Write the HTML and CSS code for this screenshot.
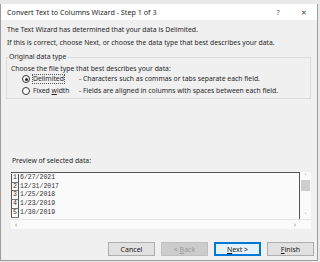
FILE: index.html
```html
<!DOCTYPE html>
<html lang="en">
  <head>
    <meta charset="UTF-8" />
    <title>Convert Text to Columns Wizard - Step 1 of 3</title>
    <link rel="stylesheet" href="styles.css">
  </head>
  <body>
    <div class="dialog">
      <div class="titlebar">
        <span class="title">Convert Text to Columns Wizard - Step 1 of 3</span>
        <span class="help">?</span>
        <span class="close">&#x2715;</span>
      </div>

      <div class="content">
        <p class="intro">The Text Wizard has determined that your data is Delimited.</p>
        <p class="intro second">If this is correct, choose Next, or choose the data type that best describes your data.</p>

        <fieldset class="group">
          <legend>Original data type</legend>
          <p class="choose">Choose the file type that best describes your data:</p>
          <div class="options">
            <label class="option"><span class="radio checked"></span><span class="focus">Delimited</span></label>
            <span class="desc">- Characters such as commas or tabs separate each field.</span>
            <label class="option"><span class="radio"></span><span>Fixed <u>w</u>idth</span></label>
            <span class="desc">- Fields are aligned in columns with spaces between each field.</span>
          </div>
        </fieldset>

        <p class="preview-label">Preview of selected data:</p>
        <div class="preview">
          <div class="preview-main">
            <div class="rows">
              <div class="row"><span class="num">1</span>6/27/2021</div>
              <div class="row"><span class="num">2</span>12/31/2017</div>
              <div class="row"><span class="num">3</span>1/25/2018</div>
              <div class="row"><span class="num">4</span>1/23/2019</div>
              <div class="row"><span class="num">5</span>1/30/2019</div>
            </div>
            <div class="vscroll">
              <span class="arrow">&#x02C4;</span>
              <span class="thumb"></span>
              <span class="spacer"></span>
              <span class="arrow">&#x02C5;</span>
            </div>
          </div>
          <div class="hscroll">
            <span>&#x2039;</span>
            <span>&#x203A;</span>
          </div>
        </div>

        <div class="buttons">
          <button class="btn">Cancel</button>
          <button class="btn disabled">&lt; <u>B</u>ack</button>
          <button class="btn default"><u>N</u>ext &gt;</button>
          <button class="btn"><u>F</u>inish</button>
        </div>
      </div>
    </div>
  </body>
</html>
```

FILE: styles.css
```css
body {
  margin: 0;
  width: 320px;
  height: 262px;
  overflow: hidden;
  background-color: #e9e9e9;
  font-family: "Noto Sans", "DejaVu Sans", sans-serif;
  font-size: 6.8px;
  color: #1f1f1f;
}

p {
  margin: 0;
}

.dialog {
  width: 316px;
  height: 256px;
  margin-top: 4px;
  border-left: 1px solid #9c9c9c;
  border-right: 1px solid #9c9c9c;
  border-bottom: 1px solid #9c9c9c;
  background-color: #f0f0f0;
  display: flex;
  flex-direction: column;
}

/* Title bar */
.titlebar {
  height: 16px;
  background-color: #ffffff;
  display: flex;
  align-items: center;
  padding-left: 6px;
  font-size: 7.2px;
}

.title {
  flex-grow: 1;
}

.help {
  width: 26px;
  text-align: center;
  color: #555;
}

.close {
  width: 26px;
  text-align: center;
  color: #444;
  font-size: 7px;
}

/* Dialog body */
.content {
  flex-grow: 1;
  padding: 5px 3px 0 6px;
  display: flex;
  flex-direction: column;
  line-height: 10px;
}

.intro.second {
  margin-top: 3px;
}

.group {
  margin: 4px 0 0 -1px;
  padding: 0 0 2px 0;
  border: 1px solid #dcdcdc;
  width: 305px;
  box-sizing: border-box;
}

.group legend {
  margin-left: 1px;
  padding: 0 1px;
  line-height: 10px;
}

.choose {
  padding: 2px 0 0 4px;
}

.options {
  display: grid;
  grid-template-columns: 57px 1fr;
  row-gap: 2px;
  padding-left: 15px;
}

.option {
  display: flex;
  align-items: center;
  gap: 3px;
}

.radio {
  width: 6px;
  height: 6px;
  border: 1px solid #333;
  border-radius: 50%;
  background-color: #fff;
  position: relative;
}

.radio.checked::after {
  content: "";
  position: absolute;
  left: 1.5px;
  top: 1.5px;
  width: 3px;
  height: 3px;
  border-radius: 50%;
  background-color: #222;
}

.focus {
  outline: 1px dotted #555;
  outline-offset: 0;
  line-height: 8px;
}

.preview-label {
  margin-top: 57px;
  padding-left: 5px;
}

/* Preview box */
.preview {
  margin-top: 6px;
  margin-left: 4px;
  width: 300px;
  height: 57px;
  background-color: #fafafa;
  display: flex;
  flex-direction: column;
}

.preview-main {
  display: flex;
  height: 47px;
}

.rows {
  flex-grow: 1;
  border-top: 1px solid #555;
  border-right: 1px solid #555;
  padding-top: 1px;
  font-family: "Liberation Mono", "DejaVu Sans Mono", monospace;
  font-size: 6.5px;
  line-height: 8.7px;
  color: #333;
}

.row {
  display: flex;
}

.num {
  width: 8px;
  box-sizing: border-box;
  border-left: 1px solid #555;
  border-right: 1px solid #555;
  border-bottom: 1px solid #777;
  text-align: center;
  margin-right: 1px;
  height: 8.7px;
}

.vscroll {
  width: 11px;
  display: flex;
  flex-direction: column;
  align-items: center;
  color: #555;
  font-size: 6px;
  line-height: 8px;
}

.thumb {
  width: 9px;
  height: 11px;
  background-color: #cdcdcd;
}

.spacer {
  flex-grow: 1;
}

.hscroll {
  display: flex;
  justify-content: space-between;
  padding: 0 15px 0 4px;
  color: #888;
  font-size: 7px;
  line-height: 9px;
  border-top: 1px solid #e4e4e4;
}

/* Buttons */
.buttons {
  margin-top: 13px;
  display: flex;
  justify-content: flex-end;
  gap: 6px;
}

.btn {
  width: 47px;
  height: 14px;
  padding: 0;
  font-family: "Noto Sans", "DejaVu Sans", sans-serif;
  font-size: 7px;
  color: #1a1a1a;
  background-color: #e1e1e1;
  border: 1px solid #adadad;
}

.btn.disabled {
  background-color: #cccccc;
  border-color: #bfbfbf;
  color: #9a9a9a;
}

.btn.default {
  background-color: #e5f1fb;
  border: 1px solid #0078d7;
  box-shadow: inset 0 0 0 1px #0078d7;
}
```
